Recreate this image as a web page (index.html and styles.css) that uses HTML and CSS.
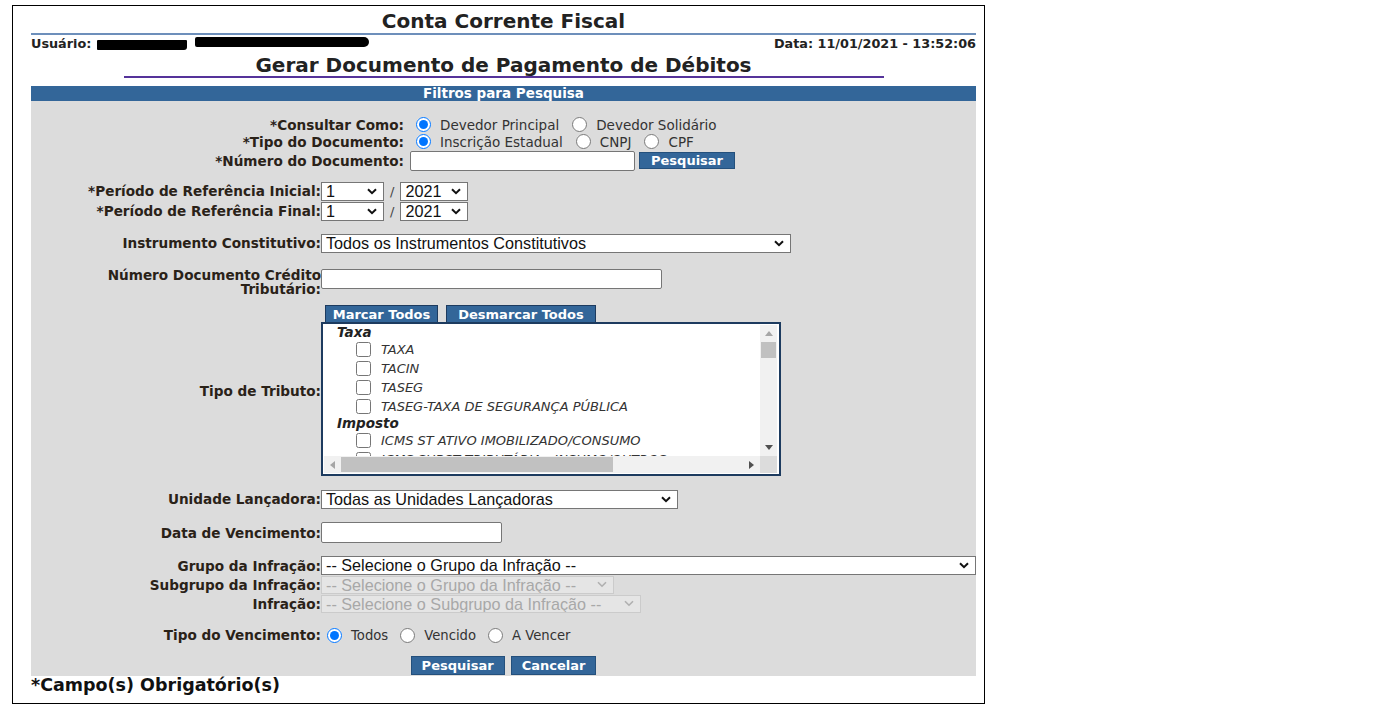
FILE: index.html
```html
<!DOCTYPE html>
<html lang="pt-BR">
<head>
<meta charset="utf-8">
<title>Conta Corrente Fiscal</title>
<link rel="stylesheet" href="styles.css">
</head>
<body>
<div class="frame">
  <div class="title">Conta Corrente Fiscal</div>
  <div class="userbar">
    <div class="user">Usuário: <span class="redact r1"></span><span class="redact r2"></span></div>
    <div class="date">Data: 11/01/2021 - 13:52:06</div>
  </div>
  <div class="subtitle">Gerar Documento de Pagamento de Débitos</div>
  <div class="barhead">Filtros para Pesquisa</div>
  <div class="panel">
    <div class="sec1">
      <div class="row r17">
        <div class="lbl wide">*Consultar Como:</div>
        <div class="fld">
          <label class="opt"><input type="radio" name="cc" class="radio" checked>Devedor Principal</label>
          <label class="opt"><input type="radio" name="cc" class="radio">Devedor Solidário</label>
        </div>
      </div>
      <div class="row r17">
        <div class="lbl wide">*Tipo do Documento:</div>
        <div class="fld">
          <label class="opt"><input type="radio" name="td" class="radio" checked>Inscrição Estadual</label>
          <label class="opt"><input type="radio" name="td" class="radio">CNPJ</label>
          <label class="opt"><input type="radio" name="td" class="radio">CPF</label>
        </div>
      </div>
      <div class="row r21">
        <div class="lbl wide">*Número do Documento:</div>
        <div class="fld">
          <input type="text" class="txt w-doc">
          <button class="btn btn-sm">Pesquisar</button>
        </div>
      </div>
    </div>

    <div class="sec gap-period">
      <div class="row r20">
        <div class="lbl">*Período de Referência Inicial:</div>
        <div class="fld">
          <span class="selwrap"><select class="sel w-mes"><option>1</option></select><svg class="chev" width="10" height="7" viewBox="0 0 10 7"><path d="M1 1.2L5 5.2L9 1.2"/></svg></span><span class="slash">/</span><span class="selwrap"><select class="sel w-ano"><option>2021</option></select><svg class="chev" width="10" height="7" viewBox="0 0 10 7"><path d="M1 1.2L5 5.2L9 1.2"/></svg></span>
        </div>
      </div>
      <div class="row r20">
        <div class="lbl">*Período de Referência Final:</div>
        <div class="fld">
          <span class="selwrap"><select class="sel w-mes"><option>1</option></select><svg class="chev" width="10" height="7" viewBox="0 0 10 7"><path d="M1 1.2L5 5.2L9 1.2"/></svg></span><span class="slash">/</span><span class="selwrap"><select class="sel w-ano"><option>2021</option></select><svg class="chev" width="10" height="7" viewBox="0 0 10 7"><path d="M1 1.2L5 5.2L9 1.2"/></svg></span>
        </div>
      </div>
    </div>

    <div class="row r20 gap-12">
      <div class="lbl">Instrumento Constitutivo:</div>
      <div class="fld"><span class="selwrap"><select class="sel w-inst"><option>Todos os Instrumentos Constitutivos</option></select><svg class="chev" width="10" height="7" viewBox="0 0 10 7"><path d="M1 1.2L5 5.2L9 1.2"/></svg></span></div>
    </div>

    <div class="row row-top gap-13">
      <div class="lbl two">Número Documento Crédito<br>Tributário:</div>
      <div class="fld"><input type="text" class="txt w-cred"></div>
    </div>

    <div class="row gap-9">
      <div class="lbl">Tipo de Tributo:</div>
      <div class="fld list-fld">
        <div class="tabs">
          <button class="tab tab-a">Marcar Todos</button>
          <button class="tab tab-b">Desmarcar Todos</button>
        </div>
        <div class="listbox">
          <div class="lb-content">
            <div class="grp">Taxa</div>
            <label class="item"><input type="checkbox" class="chk">TAXA</label>
            <label class="item"><input type="checkbox" class="chk">TACIN</label>
            <label class="item"><input type="checkbox" class="chk">TASEG</label>
            <label class="item"><input type="checkbox" class="chk">TASEG-TAXA DE SEGURANÇA PÚBLICA</label>
            <div class="grp">Imposto</div>
            <label class="item"><input type="checkbox" class="chk">ICMS ST ATIVO IMOBILIZADO/CONSUMO</label>
            <label class="item"><input type="checkbox" class="chk">ICMS SUBST TRIBUTÁRIA - INSUMO/OUTROS</label>
          </div>
          <div class="vscroll">
            <span class="sbtn"><svg width="8" height="5" viewBox="0 0 8 5"><path d="M0 5L4 0L8 5Z" fill="#a6a6a6"/></svg></span>
            <span class="vthumb"></span>
            <span class="sfill"></span>
            <span class="sbtn"><svg width="8" height="5" viewBox="0 0 8 5"><path d="M0 0L8 0L4 5Z" fill="#505050"/></svg></span>
          </div>
          <div class="hscroll">
            <span class="sbtn"><svg width="5" height="8" viewBox="0 0 5 8"><path d="M5 0L5 8L0 4Z" fill="#a6a6a6"/></svg></span>
            <span class="hthumb"></span>
            <span class="sfill"></span>
            <span class="sbtn"><svg width="5" height="8" viewBox="0 0 5 8"><path d="M0 0L5 4L0 8Z" fill="#505050"/></svg></span>
          </div>
          <div class="corner"></div>
        </div>
      </div>
    </div>

    <div class="row r20 gap-13">
      <div class="lbl">Unidade Lançadora:</div>
      <div class="fld"><span class="selwrap"><select class="sel w-uni"><option>Todas as Unidades Lançadoras</option></select><svg class="chev" width="10" height="7" viewBox="0 0 10 7"><path d="M1 1.2L5 5.2L9 1.2"/></svg></span></div>
    </div>

    <div class="row r21 gap-13">
      <div class="lbl">Data de Vencimento:</div>
      <div class="fld"><input type="text" class="txt w-data"></div>
    </div>

    <div class="sec gap-13">
      <div class="row r19">
        <div class="lbl">Grupo da Infração:</div>
        <div class="fld"><span class="selwrap"><select class="sel w-grp"><option>-- Selecione o Grupo da Infração --</option></select><svg class="chev" width="10" height="7" viewBox="0 0 10 7"><path d="M1 1.2L5 5.2L9 1.2"/></svg></span></div>
      </div>
      <div class="row r19">
        <div class="lbl">Subgrupo da Infração:</div>
        <div class="fld"><span class="selwrap"><select class="sel sm w-sub" disabled><option>-- Selecione o Grupo da Infração --</option></select><svg class="chev off" width="10" height="7" viewBox="0 0 10 7"><path d="M1 1.2L5 5.2L9 1.2"/></svg></span></div>
      </div>
      <div class="row r19">
        <div class="lbl">Infração:</div>
        <div class="fld"><span class="selwrap"><select class="sel sm w-inf" disabled><option>-- Selecione o Subgrupo da Infração --</option></select><svg class="chev off" width="10" height="7" viewBox="0 0 10 7"><path d="M1 1.2L5 5.2L9 1.2"/></svg></span></div>
      </div>
    </div>

    <div class="row r18 gap-13">
      <div class="lbl">Tipo do Vencimento:</div>
      <div class="fld">
        <label class="opt"><input type="radio" name="tv" class="radio" checked>Todos</label>
        <label class="opt"><input type="radio" name="tv" class="radio">Vencido</label>
        <label class="opt"><input type="radio" name="tv" class="radio">A Vencer</label>
      </div>
    </div>

    <div class="actions">
      <button class="btn">Pesquisar</button>
      <button class="btn">Cancelar</button>
    </div>
  </div>
  <div class="note">*Campo(s) Obrigatório(s)</div>
</div>
</body>
</html>
```
FILE: styles.css
```css
html, body {
  margin: 0;
  padding: 0;
  background: #ffffff;
}
body {
  font-family: "DejaVu Sans", Verdana, sans-serif;
  color: #2a2a2a;
}
.frame {
  box-sizing: border-box;
  width: 973px;
  height: 699px;
  margin: 5px 0 0 12px;
  border: 1px solid #000;
  padding: 3px 8px 0 18px;
}
.title {
  font-weight: bold;
  font-size: 20px;
  line-height: 24px;
  text-align: center;
  color: #222;
  border-bottom: 2px solid #6d8fbb;
}
.userbar {
  display: flex;
  justify-content: space-between;
  align-items: center;
  height: 17px;
  font-weight: bold;
  font-size: 12.8px;
  color: #222;
}
.user {
  display: flex;
  align-items: center;
}
.redact {
  display: inline-block;
  background: #000;
}
.r1 {
  width: 90px;
  height: 10px;
  margin-left: 6px;
  margin-top: 2px;
  border-radius: 1px 1px 3px 1px;
}
.r2 {
  width: 174px;
  height: 10px;
  margin-left: 8px;
  margin-top: -3px;
  border-radius: 2px 5px 5px 2px;
}
.subtitle {
  width: 760px;
  margin: 0 auto 8px;
  padding-top: 2px;
  font-weight: bold;
  font-size: 20px;
  line-height: 22px;
  text-align: center;
  color: #222;
  border-bottom: 2px solid #55339a;
}
.barhead {
  height: 15px;
  line-height: 15px;
  background: #336699;
  color: #fff;
  font-weight: bold;
  font-size: 13.5px;
  text-align: center;
}
.panel {
  background: #dcdcdc;
  padding: 15px 0 1px;
}
.row {
  display: flex;
  align-items: center;
}
.row-top {
  align-items: flex-start;
}
.r17 { height: 17px; }
.r18 { height: 18px; }
.r19 { height: 19px; }
.r20 { height: 20px; }
.r21 { height: 21px; }
.gap-period { margin-top: 10px; }
.gap-9 { margin-top: 9px; }
.gap-12 { margin-top: 12px; }
.gap-13 { margin-top: 13px; }
.lbl {
  flex: none;
  width: 290px;
  text-align: right;
  font-weight: bold;
  font-size: 13.6px;
  line-height: 14px;
  color: #2a2218;
  white-space: nowrap;
}
.lbl.wide {
  width: 373px;
  margin-right: 6px;
}
.lbl.two {
  padding-top: 2px;
}
.fld {
  display: flex;
  align-items: center;
}
.list-fld {
  display: block;
}
.row-top .fld {
  padding-top: 3px;
}
.opt {
  display: inline-flex;
  align-items: center;
  font-size: 13.2px;
  color: #333;
  margin-right: 6px;
}
.sec1 .opt {
  font-size: 13.5px;
  margin-right: 7px;
}
.radio {
  width: 15px;
  height: 15px;
  margin: 0 9px 0 6px;
}
.txt {
  box-sizing: border-box;
  height: 20px;
  border: 1px solid #767676;
  border-radius: 2px;
  background: #fff;
  padding: 0 3px;
  margin: 0;
  font: 13px "Liberation Sans", Arial, sans-serif;
}
.w-doc { width: 225px; margin-right: 4px; }
.w-cred { width: 341px; }
.w-data { width: 181px; height: 21px; }
.selwrap {
  position: relative;
  display: inline-flex;
}
.sel {
  -webkit-appearance: none;
  appearance: none;
  box-sizing: border-box;
  height: 19px;
  margin: 0;
  padding: 0 22px 0 4px;
  border: 1px solid #767676;
  border-radius: 0;
  background-color: #fff;
  color: #111;
  font-family: "Liberation Sans", Arial, sans-serif;
  font-size: 16.2px;
  line-height: 17px;
}
.sel.sm {
  height: 18px;
  line-height: 16px;
}
.sel:disabled {
  color: #a8a8a8;
  background-color: #e5e5e5;
  border-color: #cbcbcb;
  opacity: 1;
}
.chev {
  position: absolute;
  right: 7px;
  top: 6px;
  pointer-events: none;
  fill: none;
  stroke: #111;
  stroke-width: 2;
}
.chev.off {
  stroke: #b0b0b0;
  stroke-width: 1.6;
  top: 5px;
}
.w-mes { width: 63px; }
.w-ano { width: 68px; }
.w-inst { width: 470px; }
.w-uni { width: 357px; }
.w-grp { width: 655px; }
.w-sub { width: 293px; }
.w-inf { width: 320px; }
.slash {
  margin: 0 6px;
  font-size: 13px;
  color: #444;
}
.btn {
  box-sizing: border-box;
  height: 19px;
  margin: 0;
  padding: 0 10px;
  border: 1px solid #24507c;
  border-radius: 0;
  background: #336699;
  color: #fff;
  font-family: "DejaVu Sans", Verdana, sans-serif;
  font-weight: bold;
  font-size: 13px;
  line-height: 15px;
}
.btn-sm {
  height: 17px;
  padding: 0 11px;
}
.tabs {
  display: flex;
  gap: 8px;
  padding-left: 4px;
  height: 17px;
}
.tab {
  box-sizing: border-box;
  height: 17px;
  margin: 0;
  padding: 0;
  border: 1px solid #1d3b5f;
  border-bottom: none;
  border-radius: 0;
  background: #336699;
  color: #fff;
  font-family: "DejaVu Sans", Verdana, sans-serif;
  font-weight: bold;
  font-size: 13px;
  line-height: 15px;
  text-align: center;
}
.tab-a { width: 113px; }
.tab-b { width: 150px; }
.listbox {
  box-sizing: border-box;
  width: 460px;
  height: 154px;
  border: 2px solid #1d3b5f;
  padding: 1px 2px 1px 1px;
  background: #fff;
  display: grid;
  grid-template-columns: 1fr 17px;
  grid-template-rows: 1fr 17px;
}
.lb-content {
  overflow: hidden;
}
.grp {
  font-weight: bold;
  font-style: italic;
  font-size: 13.5px;
  line-height: 15px;
  padding-left: 13px;
  color: #222;
}
.item {
  display: flex;
  align-items: center;
  height: 19px;
  padding-left: 32px;
  font-style: italic;
  font-size: 13px;
  color: #333;
  white-space: nowrap;
}
.chk {
  width: 15px;
  height: 15px;
  margin: 0 10px 0 0;
}
.vscroll {
  display: flex;
  flex-direction: column;
  background: #f1f1f1;
}
.hscroll {
  display: flex;
  background: #f1f1f1;
}
.sbtn {
  flex: none;
  width: 17px;
  height: 17px;
  display: flex;
  align-items: center;
  justify-content: center;
}
.sfill {
  flex: 1;
}
.vthumb {
  flex: none;
  height: 16px;
  margin: 0 1px;
  background: #c1c1c1;
}
.hthumb {
  flex: none;
  width: 272px;
  margin: 1px 0;
  background: #c1c1c1;
}
.corner {
  background: #dcdcdc;
}
.actions {
  display: flex;
  justify-content: center;
  gap: 6px;
  margin-top: 12px;
}
.note {
  font-weight: bold;
  font-size: 17.5px;
  line-height: 19px;
  color: #111;
}
```
